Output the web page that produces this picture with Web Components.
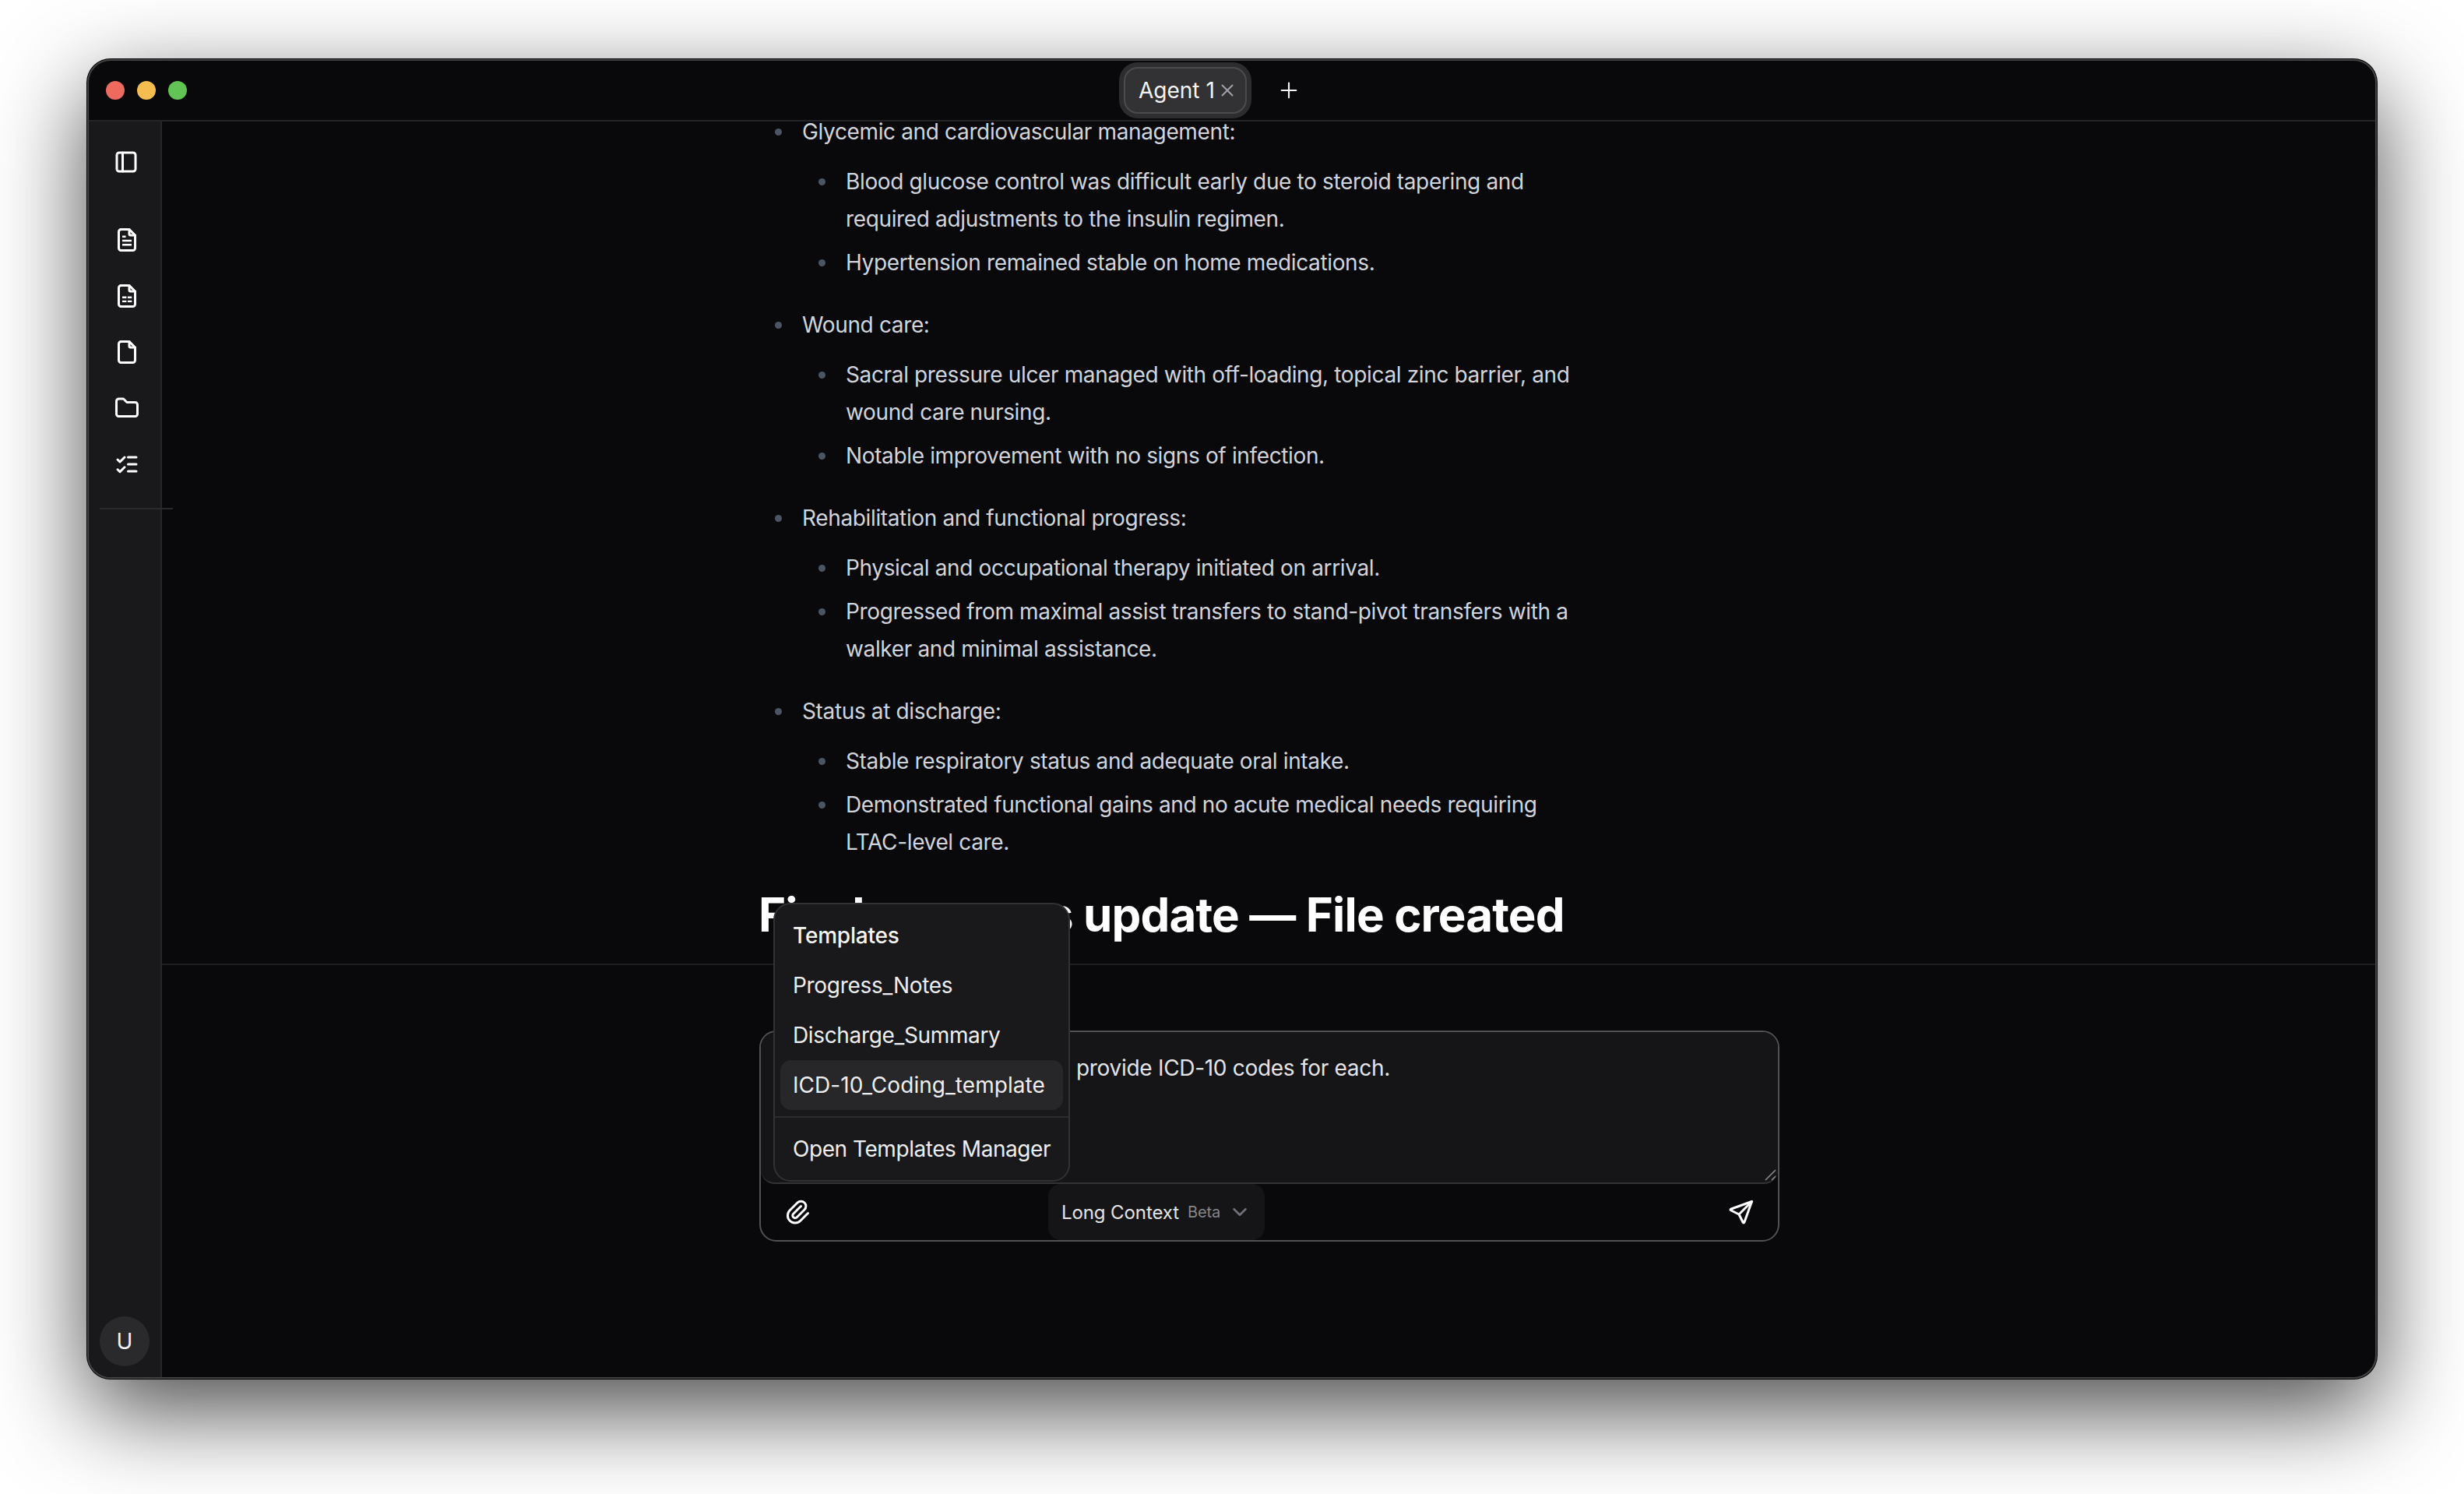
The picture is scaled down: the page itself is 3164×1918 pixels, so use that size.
<!DOCTYPE html>
<html lang="en">
<head>
<meta charset="utf-8">
<title>Agent 1</title>
<style>
  html, body { margin: 0; background: #fff; height: 1918px; overflow: hidden; }
  body { font-family: Inter, "Liberation Sans", sans-serif; padding-top: 76px; box-sizing: border-box; }
</style>
</head>
<body>
<app-window>
  <title-bar slot="top"></title-bar>
  <side-bar slot="side"></side-bar>
  <chat-thread slot="thread"></chat-thread>
  <chat-composer slot="composer">
    <template-menu slot="menu">
      <menu-row heading track="-0.2">Templates</menu-row>
      <menu-row track="-0.3">Progress_Notes</menu-row>
      <menu-row track="-0.35">Discharge_Summary</menu-row>
      <menu-row active track="0.05">ICD-10_Coding_template</menu-row>
      <menu-row slot="footer" track="-0.45">Open Templates Manager</menu-row>
    </template-menu>
    provide ICD-10 codes for each.
  </chat-composer>
</app-window>

<script>
const icon = (body, size = 36, width = 2) =>
  `<svg width="${size}" height="${size}" viewBox="0 0 24 24" fill="none" stroke="currentColor" stroke-width="${width}" stroke-linecap="round" stroke-linejoin="round">${body}</svg>`;

const filePaths = `<path d="M14 3v4a1 1 0 0 0 1 1h4"/><path d="M17 21h-10a2 2 0 0 1 -2 -2v-14a2 2 0 0 1 2 -2h7l5 5v11a2 2 0 0 1 -2 2z"/>`;

class AppWindow extends HTMLElement {
  constructor() {
    super();
    this.attachShadow({ mode: 'open' });
  }
  connectedCallback() {
    this.shadowRoot.innerHTML = `
      <style>
        :host {
          display: flex;
          flex-direction: column;
          box-sizing: border-box;
          width: 2940px;
          height: 1694px;
          margin: 0 112px;
          background: #09090b;
          border: 2px solid #434345;
          border-radius: 30px;
          overflow: hidden;
          box-shadow: 0 0 0 1px #000, 0 40px 120px 0 rgba(0,0,0,.72);
        }
        .body { flex: 1; display: flex; min-height: 0; }
        .main { flex: 1; display: flex; flex-direction: column; min-width: 0; }
      </style>
      <slot name="top"></slot>
      <div class="body">
        <slot name="side"></slot>
        <div class="main">
          <slot name="thread"></slot>
          <slot name="composer"></slot>
        </div>
      </div>`;
  }
}

class TitleBar extends HTMLElement {
  constructor() {
    super();
    this.attachShadow({ mode: 'open' });
  }
  connectedCallback() {
    this.shadowRoot.innerHTML = `
      <style>
        :host {
          display: flex;
          align-items: center;
          box-sizing: border-box;
          height: 78px;
          padding-left: 22px;
          border-bottom: 2px solid #242426;
          flex: none;
        }
        .dots { display: flex; gap: 16px; }
        .dots i { width: 24px; height: 24px; border-radius: 50%; }
        .tab {
          display: flex;
          align-items: center;
          box-sizing: border-box;
          height: 60px;
          width: 158px;
          margin-left: 1203px;
          padding-left: 17px;
          background: #323234;
          border: 2px solid #4b4b4d;
          border-radius: 18px;
          box-shadow: 0 0 0 6px #2d2d2f;
          color: #f4f4f5;
          font-size: 28px;
          white-space: nowrap;
        }
        .tab svg { color: #a1a1aa; margin-left: 3px; }
        .plus { margin-left: 38px; color: #f4f4f5; display: flex; }
      </style>
      <div class="dots">
        <i style="background:#ee6a5f"></i><i style="background:#f5bd4f"></i><i style="background:#61c454"></i>
      </div>
      <div class="tab">Agent 1${icon('<path d="M6 6l12 12M18 6l-12 12"/>', 26, 1.8)}</div>
      <div class="plus">${icon('<path d="M12 5v14M5 12h14"/>', 32, 1.6)}</div>`;
  }
}

class SideBar extends HTMLElement {
  constructor() {
    super();
    this.attachShadow({ mode: 'open' });
  }
  connectedCallback() {
    const dashes = d => `<path d="${d}" stroke-width="1.6" stroke-linecap="butt"/>`;
    this.shadowRoot.innerHTML = `
      <style>
        :host {
          display: flex;
          flex-direction: column;
          align-items: flex-start;
          box-sizing: border-box;
          width: 94px;
          flex: none;
          padding: 34px 0 14px 30px;
          background: #19191b;
          border-right: 2px solid #262628;
          position: relative;
          z-index: 1;
          color: #fff;
        }
        svg { display: block; flex: none; }
        .files { display: flex; flex-direction: column; gap: 36px; margin-top: 64px; }
        .files svg { margin-left: 1px; }
        hr {
          width: 94px;
          height: 2px;
          margin: 38px 0 0 -16px;
          border: 0;
          background: #2a2a2c;
          flex: none;
        }
        .avatar {
          margin: auto 0 0 -16px;
          width: 64px;
          height: 64px;
          border-radius: 50%;
          background: #2a2a2c;
          display: flex;
          align-items: center;
          justify-content: center;
          font-size: 28px;
          color: #f4f4f5;
        }
      </style>
      ${icon('<rect x="4" y="4" width="16" height="16" rx="2"/><path d="M9 4v16"/>')}
      <div class="files">
        ${icon(filePaths + dashes('M8 9.2h3M8 12.7h8M8 16.2h8'))}
        ${icon(filePaths + dashes('M8 13.2h3.6M12.6 13.2h3.6M8 16.6h3.6M12.6 16.6h3.6'))}
        ${icon(filePaths)}
        ${icon('<path d="M5 4h4l3 3h7a2 2 0 0 1 2 2v8a2 2 0 0 1 -2 2h-14a2 2 0 0 1 -2 -2v-11a2 2 0 0 1 2 -2"/>')}
        ${icon('<path d="M4 8l2 2l4 -4M4 16.5l2 2l4 -4M13 6h7M13 12h7M13 18h7"/>')}
      </div>
      <hr>
      <div class="avatar">U</div>`;
  }
}

class ChatThread extends HTMLElement {
  constructor() {
    super();
    this.attachShadow({ mode: 'open' });
  }
  getStyles() {
    return `
      <style>
        :host {
          display: block;
          box-sizing: border-box;
          height: 1083px;
          flex: none;
          overflow: hidden;
          border-bottom: 2px solid #1f1f21;
        }
        .column {
          width: 1310px;
          margin: -11px auto 0;
          color: #d1d5db;
          font-size: 28px;
          line-height: 48px;
          letter-spacing: -0.36px;
        }
        ul { margin: 0; padding: 0 0 0 45.5px; width: 1056px; box-sizing: border-box; list-style: disc; }
        ul ul { margin-top: 16px; width: auto; }
        li { padding-left: 10.5px; }
        li::marker { color: #4b5563; }
        .column > ul > li + li { margin-top: 32px; }
        ul ul li + li { margin-top: 8px; }
        h2 {
          margin: 33px 0 0;
          color: #fff;
          font-size: 60px;
          line-height: 72px;
          font-weight: 700;
          letter-spacing: -0.85px;
          white-space: nowrap;
        }
      </style>`;
  }
  connectedCallback() {
    this.shadowRoot.innerHTML = `${this.getStyles()}
      <div class="column">
        <ul>
          <li>Glycemic and cardiovascular management:
            <ul>
              <li>Blood glucose control was difficult early due to steroid tapering and required adjustments to the insulin regimen.</li>
              <li>Hypertension remained stable on home medications.</li>
            </ul>
          </li>
          <li>Wound care:
            <ul>
              <li>Sacral pressure ulcer managed with off-loading, topical zinc barrier, and wound care nursing.</li>
              <li>Notable improvement with no signs of infection.</li>
            </ul>
          </li>
          <li>Rehabilitation and functional progress:
            <ul>
              <li>Physical and occupational therapy initiated on arrival.</li>
              <li>Progressed from maximal assist transfers to stand-pivot transfers with a walker and minimal assistance.</li>
            </ul>
          </li>
          <li>Status at discharge:
            <ul>
              <li>Stable respiratory status and adequate oral intake.</li>
              <li>Demonstrated functional gains and no acute medical needs requiring LTAC-level care.</li>
            </ul>
          </li>
        </ul>
        <h2>Final progress update — File created</h2>
      </div>`;
  }
}

class ChatComposer extends HTMLElement {
  constructor() {
    super();
    this.attachShadow({ mode: 'open' });
  }
  connectedCallback() {
    this.shadowRoot.innerHTML = `
      <style>
        :host { display: block; padding: 84px 0 0 767px; flex: 1; position: relative; z-index: 2; }
        .box {
          position: relative;
          box-sizing: border-box;
          width: 1310px;
          height: 271px;
          border: 2px solid #525254;
          border-radius: 22px;
          display: flex;
          flex-direction: column;
        }
        .input {
          position: relative;
          box-sizing: border-box;
          height: 195px;
          flex: none;
          padding: 22px 0 0 405px;
          background: #151517;
          border-bottom: 2px solid #333335;
          border-radius: 20px 20px 18px 18px;
          color: #e4e4e7;
          font-size: 28px;
          line-height: 48px;
          letter-spacing: -0.3px;
        }
        .grip { position: absolute; right: 0; bottom: 0; display: block; }
        .tools { flex: 1; display: flex; align-items: center; padding: 0 29px; color: #fff; }
        .tools svg { display: block; flex: none; }
        .mode {
          display: flex;
          align-items: center;
          align-self: stretch;
          box-sizing: border-box;
          width: 278px;
          margin-left: 304px;
          padding-left: 17px;
          background: #151517;
          border-radius: 16px;
          color: #e4e4e7;
          font-size: 24px;
          letter-spacing: -0.1px;
        }
        .mode small { margin-left: 11px; font-size: 20px; color: #85858b; }
        .mode svg { margin-left: 10px; color: #71717a; }
        .send { margin-left: auto; }
      </style>
      <div class="box">
        <div class="input">
          <slot></slot>
          <svg class="grip" width="20" height="20" viewBox="0 0 20 20" stroke="#8a8a8c" stroke-width="1.6" fill="none"><path d="M4 17L17 4M12 17L17 12"/></svg>
        </div>
        <div class="tools">
          ${icon('<path d="M15 7l-6.5 6.5a1.5 1.5 0 0 0 3 3l6.5 -6.5a3 3 0 0 0 -6 -6l-6.5 6.5a4.5 4.5 0 0 0 9 9l6.5 -6.5"/>')}
          <div class="mode">Long Context<small>Beta</small>${icon('<path d="M6 9l6 6l6 -6"/>', 30)}</div>
          <span class="send">${icon('<path d="M10 14l11 -11"/><path d="M21 3l-6.5 18a.55 .55 0 0 1 -1 0l-3.5 -7l-7 -3.5a.55 .55 0 0 1 0 -1l18 -6.5"/>')}</span>
        </div>
        <slot name="menu"></slot>
      </div>`;
  }
}

class TemplateMenu extends HTMLElement {
  constructor() {
    super();
    this.attachShadow({ mode: 'open' });
  }
  connectedCallback() {
    this.shadowRoot.innerHTML = `
      <style>
        :host {
          position: absolute;
          left: 16px;
          top: -166px;
          box-sizing: border-box;
          width: 381px;
          background: #19191b;
          border: 2px solid #323234;
          border-radius: 22px;
        }
        .list, .foot { padding: 8px 7px; display: block; }
        .foot { border-top: 2px solid #2c2c2e; }
      </style>
      <div class="list"><slot></slot></div>
      <div class="foot"><slot name="footer"></slot></div>`;
  }
}

class MenuRow extends HTMLElement {
  constructor() {
    super();
    this.attachShadow({ mode: 'open' });
  }
  connectedCallback() {
    this.shadowRoot.innerHTML = `
      <style>
        :host {
          display: flex;
          align-items: center;
          height: 64px;
          padding-left: 16px;
          border-radius: 14px;
          color: #eeeef0;
          font-size: 28px;
          white-space: nowrap;
          letter-spacing: ${this.getAttribute('track') || 0}px;
        }
        :host([heading]) { font-weight: 500; color: #f4f4f5; }
        :host([active]) { background: #27272a; }
      </style>
      <slot></slot>`;
  }
}

customElements.define('app-window', AppWindow);
customElements.define('title-bar', TitleBar);
customElements.define('side-bar', SideBar);
customElements.define('chat-thread', ChatThread);
customElements.define('chat-composer', ChatComposer);
customElements.define('template-menu', TemplateMenu);
customElements.define('menu-row', MenuRow);
</script>
</body>
</html>
